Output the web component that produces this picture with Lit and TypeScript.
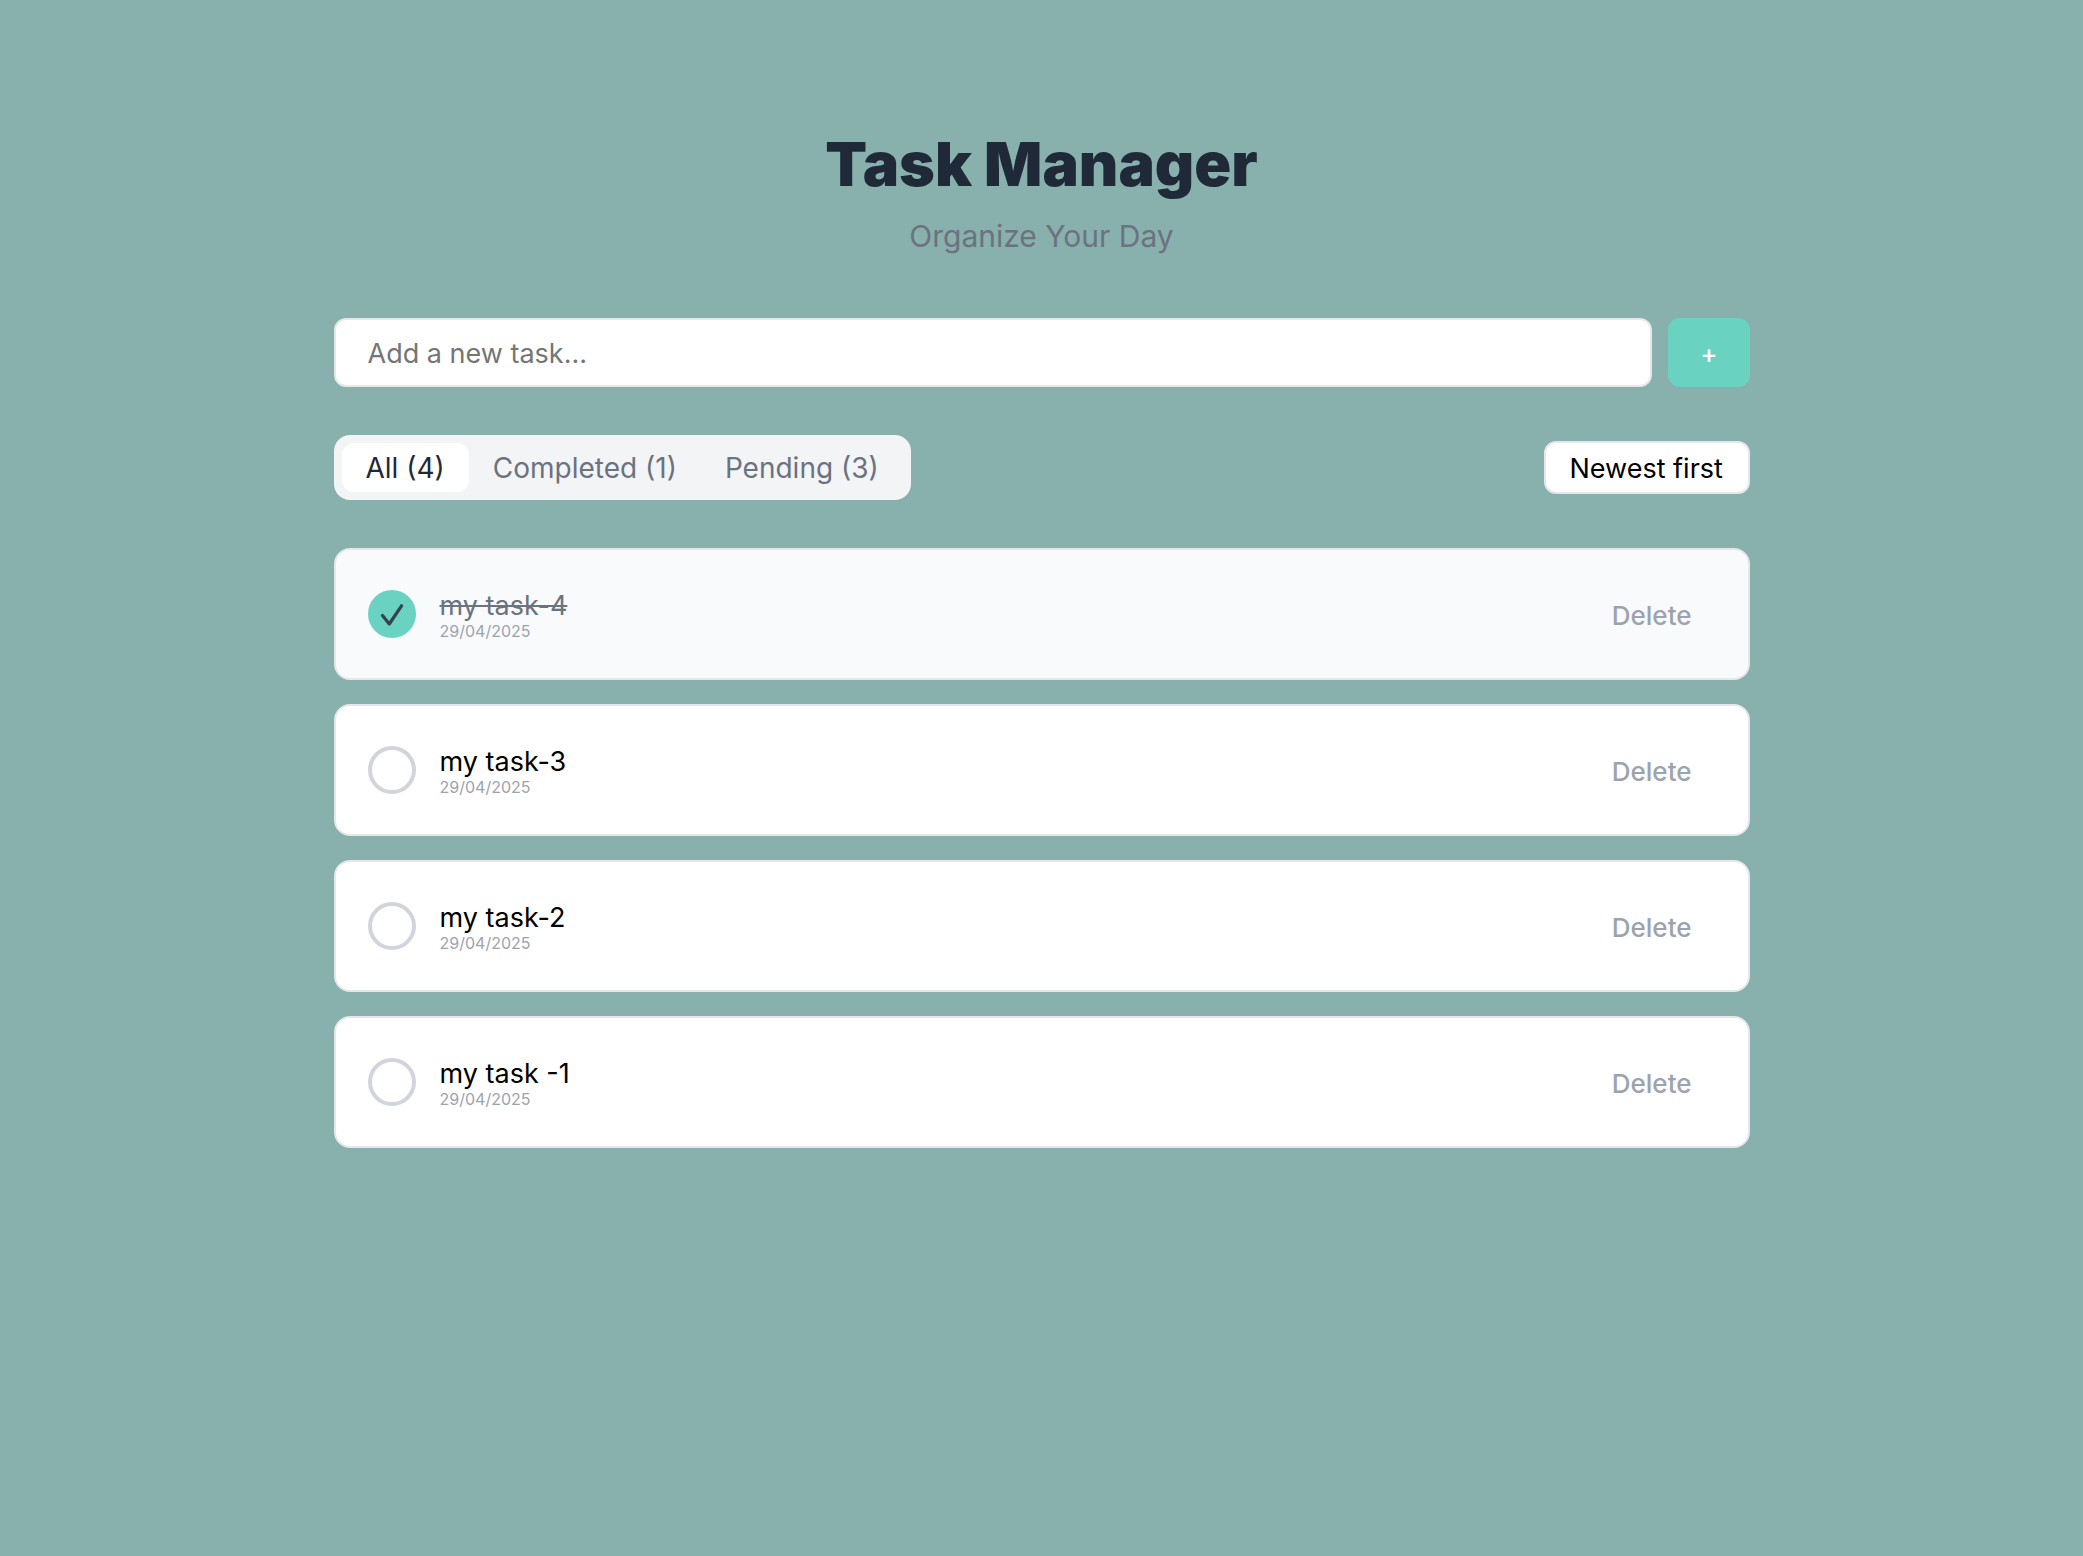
import { LitElement, html, css, svg } from "lit";
import { customElement, property, state } from "lit/decorators.js";
import { classMap } from "lit/directives/class-map.js";

interface Task {
  id: number;
  title: string;
  date: string;
  done: boolean;
}

type Filter = "all" | "completed" | "pending";

const checkIcon = svg`
  <path d="M14.5 25.5 L21.3 34 L33.5 15.8" fill="none" stroke="#374151"
    stroke-width="3.2" stroke-linecap="round" stroke-linejoin="round" />`;

@customElement("task-card")
export class TaskCard extends LitElement {
  static styles = css`
    :host {
      display: block;
    }
    .card {
      display: flex;
      align-items: center;
      gap: 24px;
      padding: 39px 32px;
      border: 2px solid #e5e7eb;
      border-radius: 16px;
      background: #fff;
      color: #000;
    }
    .card.done {
      background: #f9fafc;
    }
    .toggle {
      display: grid;
      flex: none;
    }
    .toggle > * {
      grid-area: 1 / 1;
      width: 48px;
      height: 48px;
      margin: 0;
      box-sizing: border-box;
    }
    .box {
      appearance: none;
      border: 4px solid #d1d5db;
      border-radius: 50%;
      cursor: pointer;
    }
    .box:checked {
      border-color: #6ad2c0;
      background: #6ad2c0;
    }
    .check {
      pointer-events: none;
    }
    .text {
      display: flex;
      flex: 1;
      flex-direction: column;
      min-width: 0;
    }
    .title {
      align-self: flex-start;
      font-size: 27px;
      line-height: 34px;
    }
    .done .title {
      color: #6b7280;
      text-decoration: line-through;
      text-decoration-thickness: 2px;
    }
    .date {
      color: #9ca3af;
      font-size: 16px;
      line-height: 16px;
    }
    .delete {
      padding: 9px 24px 7px;
      border: 0;
      background: none;
      color: #9ca3af;
      font: inherit;
      font-size: 26px;
      font-weight: 500;
      line-height: 33px;
      cursor: pointer;
    }
  `;

  @property({ attribute: false }) task!: Task;

  private send(name: string) {
    this.dispatchEvent(new CustomEvent(name, { detail: this.task.id }));
  }

  render() {
    const { title, date, done } = this.task;
    return html`
      <div class=${classMap({ card: true, done })}>
        <div class="toggle">
          <input
            class="box"
            id="done"
            type="checkbox"
            .checked=${done}
            @change=${() => this.send("toggle-task")}
          />
          ${done
            ? html`<svg class="check" viewBox="0 0 48 48" aria-hidden="true">${checkIcon}</svg>`
            : null}
        </div>
        <div class="text">
          <label class="title" for="done">${title}</label>
          <time class="date">${date}</time>
        </div>
        <button class="delete" type="button" @click=${() => this.send("delete-task")}>Delete</button>
      </div>
    `;
  }
}

@customElement("app-root")
export class AppRoot extends LitElement {
  static styles = css`
    :host {
      display: block;
      min-height: 100vh;
      box-sizing: border-box;
      padding: 128px 32px;
      background: #88b0ac;
      font-family: Inter, "Liberation Sans", sans-serif;
    }
    .page {
      max-width: 1416px;
      margin: 0 auto;
    }
    .header {
      margin-bottom: 62px;
      text-align: center;
    }
    .heading {
      margin: 0 0 16px;
      color: #1f2937;
      font-size: 61px;
      font-weight: 900;
      line-height: 72px;
    }
    .subtitle {
      margin: 0;
      color: #6b7280;
      font-size: 30px;
      line-height: 40px;
    }
    .add {
      display: flex;
      gap: 16px;
      margin-bottom: 48px;
    }
    .field {
      flex: 1;
      min-width: 0;
      padding: 17px 32px 15px;
      border: 2px solid #e5e7eb;
      border-radius: 12px;
      background: #fff;
      color: #1f2937;
      font: inherit;
      font-size: 27px;
      line-height: 33px;
    }
    .field::placeholder {
      color: #757575;
    }
    .plus {
      padding: 2px 32px 0;
      border: 0;
      border-radius: 12px;
      background: #6ad2c0;
      color: #fff;
      font: inherit;
      font-size: 26px;
      font-weight: 500;
      cursor: pointer;
    }
    .controls {
      display: flex;
      align-items: center;
      justify-content: space-between;
      margin-bottom: 48px;
    }
    .tabs {
      display: flex;
      padding: 8px;
      border-radius: 16px;
      background: #f3f4f6;
    }
    .tab {
      padding: 9px 24px 7px;
      border: 0;
      border-radius: 12px;
      background: none;
      color: #6b7280;
      font: inherit;
      font-size: 28px;
      line-height: 33px;
      cursor: pointer;
    }
    .tab.active {
      background: #fff;
      color: #1f2937;
    }
    .sort {
      appearance: none;
      padding: 9px 24px 7px;
      border: 2px solid #e5e7eb;
      border-radius: 12px;
      background: #fff;
      color: #000;
      font: inherit;
      font-size: 27px;
      line-height: 33px;
    }
    .list {
      display: flex;
      flex-direction: column;
      gap: 24px;
      margin: 0;
      padding: 0;
      list-style: none;
    }
  `;

  @state() private filter: Filter = "all";
  @state() private order = "newest";
  @state() private tasks: Task[] = [
    { id: 4, title: "my task-4", date: "29/04/2025", done: true },
    { id: 3, title: "my task-3", date: "29/04/2025", done: false },
    { id: 2, title: "my task-2", date: "29/04/2025", done: false },
    { id: 1, title: "my task -1", date: "29/04/2025", done: false },
  ];

  private add(e: Event) {
    e.preventDefault();
    const field = this.renderRoot.querySelector<HTMLInputElement>(".field")!;
    const title = field.value.trim();
    if (!title) return;
    const id = Math.max(0, ...this.tasks.map((t) => t.id)) + 1;
    const date = new Date().toLocaleDateString("en-GB");
    this.tasks = [{ id, title, date, done: false }, ...this.tasks];
    field.value = "";
  }

  private toggle(id: number) {
    this.tasks = this.tasks.map((t) => (t.id === id ? { ...t, done: !t.done } : t));
  }

  private remove(id: number) {
    this.tasks = this.tasks.filter((t) => t.id !== id);
  }

  private get visible() {
    return this.tasks
      .filter((t) => this.filter === "all" || t.done === (this.filter === "completed"))
      .sort((a, b) => (this.order === "newest" ? b.id - a.id : a.id - b.id));
  }

  render() {
    const done = this.tasks.filter((t) => t.done).length;
    const tabs: [Filter, string, number][] = [
      ["all", "All", this.tasks.length],
      ["completed", "Completed", done],
      ["pending", "Pending", this.tasks.length - done],
    ];
    return html`
      <main class="page">
        <header class="header">
          <h1 class="heading">Task Manager</h1>
          <p class="subtitle">Organize Your Day</p>
        </header>
        <form class="add" @submit=${this.add}>
          <input class="field" type="text" placeholder="Add a new task..." aria-label="New task" />
          <button class="plus" type="submit" aria-label="Add task">+</button>
        </form>
        <div class="controls">
          <div class="tabs">
            ${tabs.map(
              ([key, label, count]) => html`
                <button
                  type="button"
                  class=${classMap({ tab: true, active: this.filter === key })}
                  aria-pressed=${this.filter === key}
                  @click=${() => (this.filter = key)}
                >${label} (${count})</button>
              `,
            )}
          </div>
          <select
            class="sort"
            aria-label="Sort order"
            @change=${(e: Event) => (this.order = (e.target as HTMLSelectElement).value)}
          >
            <option value="newest">Newest first</option>
            <option value="oldest">Oldest first</option>
          </select>
        </div>
        <ul class="list">
          ${this.visible.map(
            (task) => html`
              <li>
                <task-card
                  .task=${task}
                  @toggle-task=${() => this.toggle(task.id)}
                  @delete-task=${() => this.remove(task.id)}
                ></task-card>
              </li>
            `,
          )}
        </ul>
      </main>
    `;
  }
}
